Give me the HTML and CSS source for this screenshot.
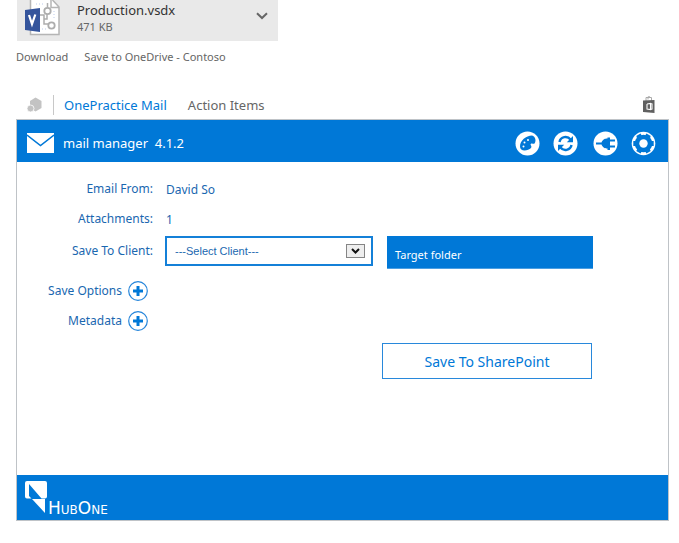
FILE: index.html
```html
<!DOCTYPE html>
<html lang="en">
<head>
<meta charset="utf-8">
<title>OnePractice Mail</title>
<link rel="stylesheet" href="styles.css">
</head>
<body>
<section class="attachment">
  <svg class="file-icon" width="36" height="36" viewBox="0 0 36 36" aria-hidden="true">
    <path d="M6 0V34.500H34V7L27 0z" fill="#fff"/>
    <path d="M5.500 0V34.500H34V7L27.500 0M26 0V7.500H34" fill="none" stroke="#b5b5b5" stroke-width="1.500"/>
    <path d="M11 4H18M29 11V18M11 29H21" fill="none" stroke="#bccbea" stroke-dasharray="1 2"/>
    <path d="M14 15H19V24H23M19 19H22V14M22.500 3V7" fill="none" stroke="#adadad" stroke-width="1.500"/>
    <circle cx="22.500" cy="11" r="3.200" fill="#fff" stroke="#adadad" stroke-width="1.800"/>
    <circle cx="26.500" cy="25.500" r="3.200" fill="#fff" stroke="#adadad" stroke-width="1.800"/>
    <path d="M0 10L15 8V32L0 30z" fill="#34549c"/>
    <path d="M4 15L7 24L10.300 14.500" fill="none" stroke="#fff" stroke-width="2.200"/>
  </svg>
  <div class="file-text">
    <div class="file-name">Production.vsdx</div>
    <div class="file-size">471 KB</div>
  </div>
  <button class="plain" type="button" aria-label="More actions">
    <svg width="12" height="8" viewBox="0 0 12 8"><path d="M1 1.200L6 6L11 1.200" fill="none" stroke="#666" stroke-width="2"/></svg>
  </button>
</section>
<nav class="file-links">
  <a href="#download">Download</a>
  <a href="#onedrive">Save to OneDrive - Contoso</a>
</nav>

<nav class="tabs">
  <svg width="16" height="16" viewBox="0 0 16 16" aria-hidden="true">
    <path d="M8.500 .5L14.500 4V11L8.500 14.500L3 11V4z" fill="#c3c3c3"/>
    <circle cx="3.500" cy="11.500" r="3.500" fill="#c3c3c3" stroke="#fff" stroke-width=".8"/>
  </svg>
  <a class="tab active" href="#mail">OnePractice Mail</a>
  <a class="tab" href="#actions">Action Items</a>
  <a class="store" href="#store" aria-label="Office store">
    <svg width="14" height="18" viewBox="0 0 14 18">
      <path d="M4 5V1.500H9.500V5M6 3.500V.8H8" fill="none" stroke="#aaa" stroke-width="1"/>
      <path d="M1 4.500L12.500 4V17L1 16z" fill="#606060"/>
      <path d="M5 8L8.500 7.500V13.500L5 13V8M8.500 7.500L10 8V13L8.500 13.500" fill="none" stroke="#fff" stroke-width="1.100"/>
    </svg>
  </a>
</nav>

<main class="panel">
  <header class="bar">
    <svg width="27" height="20" viewBox="0 0 27 20" aria-hidden="true">
      <rect width="27" height="20" fill="#fff"/>
      <path d="M0 2L13.500 12.500L27 2" fill="none" stroke="#0078d7" stroke-width="1.500"/>
    </svg>
    <h1>mail manager&nbsp; 4.1.2</h1>
    <div class="tools">
      <button class="plain" type="button" aria-label="Theme">
        <svg width="25" height="25" viewBox="0 0 25 25">
          <circle cx="12.500" cy="12.500" r="12" fill="#fff"/>
          <path d="M5 15.500C5 9.500 11 4.500 17 4.500C20.500 5.500 21.500 10 19.500 12.500C18.500 13.500 17.500 12 16 12.800C14.500 14 17.500 15 16 17C14.500 18.500 12 19.500 9.500 19.500C7 19.500 5 18 5 15.500z" fill="#0078d7"/>
          <g fill="#fff"><circle cx="8.500" cy="15.500" r="1"/><circle cx="9.500" cy="11.500" r="1"/><circle cx="13" cy="9" r="1"/></g>
        </svg>
      </button>
      <button class="plain" type="button" aria-label="Refresh">
        <svg width="25" height="25" viewBox="0 0 25 25">
          <circle cx="12.500" cy="12.500" r="12" fill="#fff"/>
          <path d="M6.500 11C7.500 5.500 14.500 4.500 17.500 8.500M18.500 14C17.500 19.500 10.500 20.500 7.500 16.500" fill="none" stroke="#0078d7" stroke-width="2.400"/>
          <path d="M20 5V11.200H13.800zM5 20V13.800H11.200z" fill="#0078d7"/>
        </svg>
      </button>
      <button class="plain plug" type="button" aria-label="Connection">
        <svg width="25" height="25" viewBox="0 0 25 25">
          <circle cx="12.500" cy="12.500" r="12" fill="#fff"/>
          <path d="M3 11.500H8.500C10 8 12 7.500 14.500 7.500V6.500H17V19H14.500V17.500C12 17.500 10 17 8.500 13.500H3zM17 8.500H22V10.500H17zM17 14.500H22V16.500H17z" fill="#0078d7"/>
        </svg>
      </button>
      <button class="plain" type="button" aria-label="Settings">
        <svg width="25" height="25" viewBox="0 0 25 25">
          <circle cx="12.500" cy="12.500" r="11.800" fill="#fff"/>
          <circle cx="12.500" cy="12.500" r="8.800" fill="#0078d7"/>
          <path d="M7.400 3.700L17.600 21.300M17.600 3.700L7.400 21.300M2.300 12.500H22.700" stroke="#0078d7" stroke-width="5"/>
          <circle cx="12.500" cy="12.500" r="4.200" fill="#fff"/>
        </svg>
      </button>
    </div>
  </header>

  <form class="form">
    <div class="row">
      <span class="label">Email From:</span>
      <span class="value">David So</span>
    </div>
    <div class="row">
      <span class="label">Attachments:</span>
      <span class="value">1</span>
    </div>
    <div class="row client">
      <label class="label" for="client">Save To Client:</label>
      <div class="fields">
        <div class="select-box">
          <select id="client"><option>---Select Client---</option></select>
          <svg class="arrow" width="19" height="14" viewBox="0 0 19 14" aria-hidden="true">
            <rect x=".5" y=".5" width="18" height="13" fill="#eee" stroke="#858585"/>
            <path d="M6 5L9.500 8.500L13 5" fill="none" stroke="#111" stroke-width="2"/>
          </svg>
        </div>
        <button class="target" type="button">Target folder</button>
      </div>
    </div>
    <div class="row expand">
      <span class="label" id="options">Save Options</span>
      <button class="plain" type="button" aria-labelledby="options">
        <svg width="20" height="20" viewBox="0 0 20 20"><circle cx="10" cy="10" r="9.300" fill="#fff" stroke="#2585da" stroke-width="1.200"/><path d="M10 5V15M5 10H15" stroke="#0078d7" stroke-width="3"/></svg>
      </button>
    </div>
    <div class="row expand">
      <span class="label" id="metadata">Metadata</span>
      <button class="plain" type="button" aria-labelledby="metadata">
        <svg width="20" height="20" viewBox="0 0 20 20"><circle cx="10" cy="10" r="9.300" fill="#fff" stroke="#2585da" stroke-width="1.200"/><path d="M10 5V15M5 10H15" stroke="#0078d7" stroke-width="3"/></svg>
      </button>
    </div>
    <button class="save" type="button">Save To SharePoint</button>
  </form>

  <footer class="brand">
    <svg width="23" height="33" viewBox="0 0 23 33" aria-hidden="true">
      <path d="M2 0H20Q22 0 22 2V15.500Q22 17.500 20 17.500H16.500L4 3V15L6.500 17.500H2Q0 17.500 0 15.500V2Q0 0 2 0z" fill="#fff"/>
      <path d="M7 18H20V32z" fill="#fff"/>
    </svg>
    <span>HubOne</span>
  </footer>
</main>
</body>
</html>
```
FILE: styles.css
```css
* { box-sizing: border-box; }

body {
  margin: 0;
  padding: 0 10px 0 16px;
  background: #fff;
  color: #666;
  font-family: "Noto Sans", "Open Sans", sans-serif;
  font-size: 13px;
}

svg { display: block; }
a { color: inherit; text-decoration: none; }

.plain {
  padding: 0;
  border: 0;
  background: none;
}

.attachment {
  display: flex;
  align-items: flex-start;
  width: 40%;
  height: 41px;
  margin-left: 1px;
  padding: 0 10px 0 8px;
  background: #e9e9e9;
}
.file-text { flex: 1; margin-left: 16px; }
.file-name { color: #333; font-size: 13px; line-height: 20px; }
.file-size { font-size: 11px; line-height: 13px; }
.attachment .plain { margin-top: 12px; }

.file-links {
  display: flex;
  gap: 16px;
  padding-top: 8px;
  font-size: 11px;
  line-height: 16px;
}

.tabs {
  display: flex;
  align-items: center;
  height: 20px;
  margin-top: 30px;
  padding: 0 13px 0 11px;
}
.tab {
  margin-left: 21px;
  font-size: 13px;
  line-height: 20px;
}
.tab.active {
  margin-left: 10px;
  padding-left: 10px;
  border-left: 1px solid #c8c8c8;
  color: #0078d7;
}
.store { margin-left: auto; }

.panel {
  margin-top: 4px;
  border: 1px solid #bfc3c7;
}

.bar {
  display: flex;
  align-items: center;
  height: 42px;
  padding: 4px 12px 0 10px;
  background: #0078d7;
  color: #fff;
}
.bar svg { flex: none; }
.bar h1 {
  margin: 0 0 0 9px;
  font-size: 13px;
  font-weight: 400;
  line-height: 20px;
}
.tools {
  display: flex;
  gap: 13px;
  margin-left: auto;
}
.plug { margin-left: 2px; }

.form {
  display: flex;
  flex-direction: column;
  min-height: 313px;
  padding-top: 12px;
  color: #1a67b0;
}
.row {
  display: grid;
  grid-template-columns: 136px 1fr;
  column-gap: 13px;
  align-items: center;
  height: 30px;
}
.label {
  font-size: 12px;
  line-height: 20px;
  text-align: right;
}
.value { font-size: 12px; }

.client {
  column-gap: 12px;
  align-items: start;
  height: 33px;
  margin: 2px 0 7px;
}
.client .label { line-height: 30px; }
.fields {
  display: grid;
  grid-template-columns: 208fr 206fr;
  column-gap: 14px;
  align-items: start;
  margin-right: 75px;
}
.select-box { position: relative; }
.select-box select {
  display: block;
  width: 100%;
  height: 30px;
  padding: 0 30px 0 8px;
  border: 2px solid #1480d8;
  border-radius: 0;
  appearance: none;
  background: #fff;
  color: #1a67b0;
  font-family: "Liberation Sans", Arial, sans-serif;
  font-size: 11px;
}
.arrow {
  position: absolute;
  top: 8px;
  right: 8px;
  pointer-events: none;
}
.target {
  height: 33px;
  padding: 4px 8px 0;
  border: 0;
  border-bottom: 1px solid #4c9fe2;
  background: #0078d7;
  color: #fff;
  font-family: inherit;
  font-size: 11px;
  text-align: left;
}

.expand {
  grid-template-columns: 105px auto;
  justify-content: start;
  column-gap: 6px;
}

.save {
  align-self: flex-end;
  width: 210px;
  height: 36px;
  margin: 7px 76px 0 0;
  border: 1px solid #2888db;
  background: #fff;
  color: #0078d7;
  font-family: inherit;
  font-size: 14px;
}

.brand {
  display: flex;
  align-items: flex-start;
  height: 45px;
  padding: 6px 8px 0;
  background: #0078d7;
  color: #fff;
}
.brand span {
  align-self: flex-end;
  padding-bottom: 3px;
  font-family: "DejaVu Sans", Verdana, sans-serif;
  font-size: 17px;
  font-variant: small-caps;
  line-height: 17px;
}
```
